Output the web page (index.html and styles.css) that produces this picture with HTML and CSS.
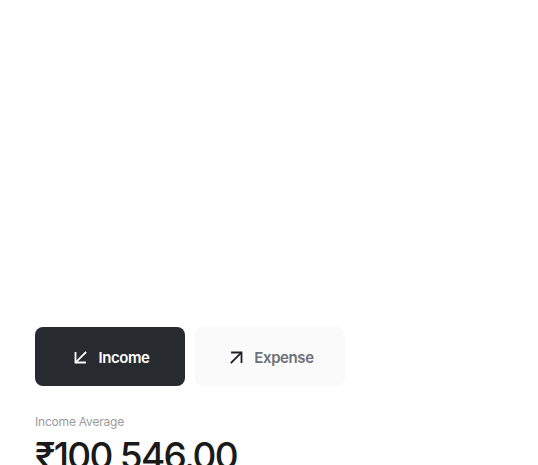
FILE: index.html
```html
<!DOCTYPE html>
<html>
<head>
<meta charset="utf-8">
<link rel="stylesheet" href="styles.css">
</head>
<body>
<main class="page">
  <div class="spacer"></div>
  <div class="tabs">
    <button class="tab tab-active">
      <svg width="13" height="13" viewBox="0 0 13 13" fill="none" stroke="currentColor" stroke-width="1.8" stroke-linecap="square"><path d="M11.5 1.5 L2.5 10.5"/><path d="M1.5 2 V11.5 H11"/></svg>
      <span>Income</span>
    </button>
    <button class="tab">
      <svg width="13" height="13" viewBox="0 0 13 13" fill="none" stroke="currentColor" stroke-width="1.8" stroke-linecap="square"><path d="M1.5 11.5 L10.5 2.5"/><path d="M2 1.5 H11.5 V11"/></svg>
      <span>Expense</span>
    </button>
  </div>
  <div class="summary">
    <div class="label">Income Average</div>
    <div class="amount">₹100,546.00</div>
  </div>
</main>
</body>
</html>
```
FILE: styles.css
```css
html, body { margin: 0; padding: 0; background: #fff; }
body { font-family: Inter, "Noto Sans", sans-serif; overflow: hidden; }
.page { padding: 0 35px; height: 465px; }
.spacer { height: 327px; }
.tabs { display: flex; gap: 10px; }
.tab {
  width: 150px; height: 59px; border: none; border-radius: 8px;
  background: #fafafa; color: #6d7078;
  display: flex; align-items: center; justify-content: center; gap: 11px;
  font-family: Inter, sans-serif; font-size: 15px; font-weight: 600; letter-spacing: -0.4px;
  padding: 2px 0 0 4px;
}
.tab svg { color: #1e2024; }
.tab-active { background: #272a2f; color: #fff; }
.tab-active svg { color: #fff; }
.summary { margin-top: 28px; }
.label { font-size: 12px; color: #9a9a9a; letter-spacing: -0.2px; line-height: 16px; }
.amount { font-size: 37px; font-weight: 500; color: #1a1a1a; letter-spacing: -1.7px; line-height: 44px; margin-top: 4px; }
```
